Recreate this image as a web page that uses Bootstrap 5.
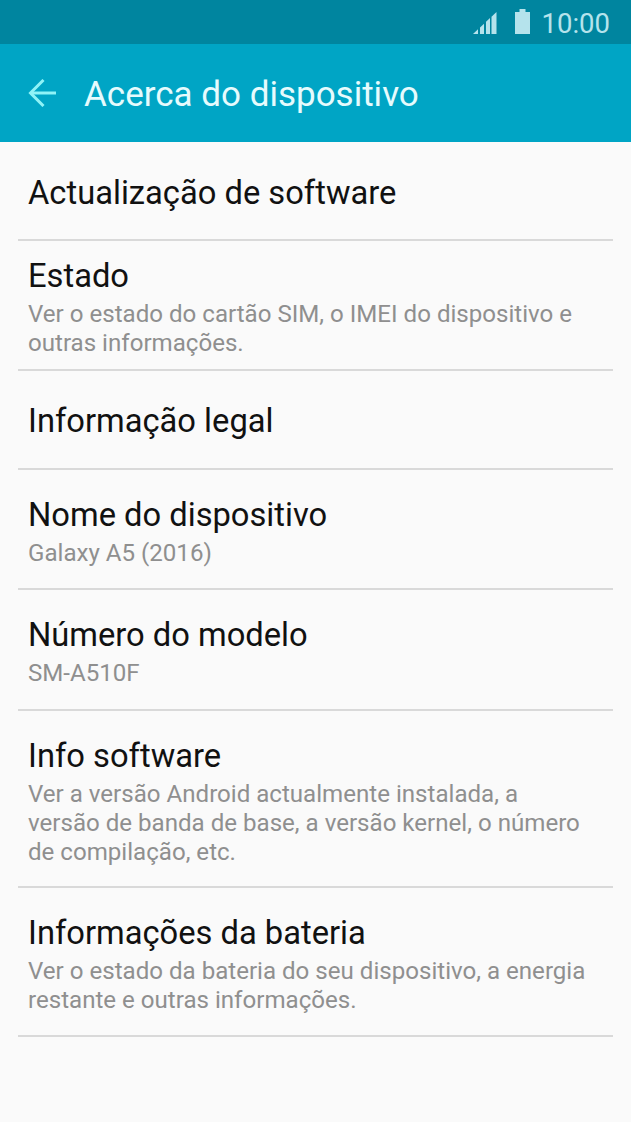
<!DOCTYPE html>
<html lang="pt">
<head>
  <meta charset="UTF-8" />
  <meta name="viewport" content="width=device-width, initial-scale=1" />
  <title>Acerca do dispositivo</title>
  <link href="https://cdn.jsdelivr.net/npm/bootstrap@5.3.0/dist/css/bootstrap.min.css" rel="stylesheet" />
  <style>
    body {
      background: #fafafa;
      font-family: Roboto, "Liberation Sans", sans-serif;
      min-height: 1122px;
    }
    .status-strip {
      height: 44px;
      background: #00859f;
      color: #b5e3ec;
      font-size: 27.5px;
      line-height: 1;
      padding-right: 21px;
      padding-top: 2px;
    }
    .signal-icon { margin-right: 18px; }
    .battery-icon { margin-right: 12px; margin-top: -3px; }
    .clock-text { margin-top: 1px; }
    .app-strip {
      height: 98px;
      background: #00a5c5;
      color: #e6fbfd;
      font-size: 35px;
      padding-left: 28px;
    }
    .app-strip svg { margin-right: 27px; }
    .app-title { margin-top: 4px; }
    .setting-list { margin: 0 18px; }
    .setting-row {
      border-bottom: 2px solid #d9d9d9;
      padding: 25px 10px 0;
    }
    .row-plain { height: 99px; padding-top: 31px; }
    .row-tight { height: 130px; padding-top: 15px; }
    .row-legal { height: 99px; padding-top: 30px; }
    .row-one { height: 120px; }
    .row-model { height: 121px; }
    .row-three { height: 177px; }
    .row-two { height: 149px; }
    .row-name {
      font-size: 32.7px;
      line-height: 40px;
      color: #111;
    }
    .row-sub {
      font-size: 24.1px;
      line-height: 29px;
      color: #8f8f8f;
      margin-top: 4px;
      max-width: 560px;
    }
  </style>
</head>
<body>

<div class="status-strip d-flex align-items-center justify-content-end">
  <svg class="signal-icon" width="24" height="22" viewBox="0 0 24 22" fill="#b5e3ec">
    <path d="M0 22 L5 17.300 V22 Z" />
    <path d="M7 22 V15.500 L11 11.700 V22 Z" />
    <path d="M13 22 V9.800 L17 6 V22 Z" />
    <path d="M18.500 22 V4.700 L23.500 0 V22 Z" />
  </svg>
  <svg class="battery-icon" width="15" height="25" viewBox="0 0 15 25" fill="#b5e3ec">
    <path d="M4.500 0 H10.500 V3 H15 V25 H0 V3 H4.500 Z" />
  </svg>
  <span class="clock-text">10:00</span>
</div>

<div class="app-strip d-flex align-items-center">
  <svg width="29" height="28" viewBox="0 0 29 28" fill="none" stroke="#8ff3f7" stroke-width="3">
    <path d="M28 14 H3" />
    <path d="M15.500 1 L2.500 14 L15.500 27" />
  </svg>
  <span class="app-title">Acerca do dispositivo</span>
</div>

<div class="setting-list">
  <div class="setting-row row-plain">
    <div class="row-name">Actualização de software</div>
  </div>
  <div class="setting-row row-tight">
    <div class="row-name">Estado</div>
    <div class="row-sub">Ver o estado do cartão SIM, o IMEI do dispositivo e outras informações.</div>
  </div>
  <div class="setting-row row-legal">
    <div class="row-name">Informação legal</div>
  </div>
  <div class="setting-row row-one">
    <div class="row-name">Nome do dispositivo</div>
    <div class="row-sub">Galaxy A5 (2016)</div>
  </div>
  <div class="setting-row row-model">
    <div class="row-name">Número do modelo</div>
    <div class="row-sub">SM-A510F</div>
  </div>
  <div class="setting-row row-three">
    <div class="row-name">Info software</div>
    <div class="row-sub">Ver a versão Android actualmente instalada, a versão de banda de base, a versão kernel, o número de compilação, etc.</div>
  </div>
  <div class="setting-row row-two">
    <div class="row-name">Informações da bateria</div>
    <div class="row-sub">Ver o estado da bateria do seu dispositivo, a energia restante e outras informações.</div>
  </div>
</div>

<script src="https://cdn.jsdelivr.net/npm/bootstrap@5.3.0/dist/js/bootstrap.bundle.min.js"></script>
</body>
</html>
